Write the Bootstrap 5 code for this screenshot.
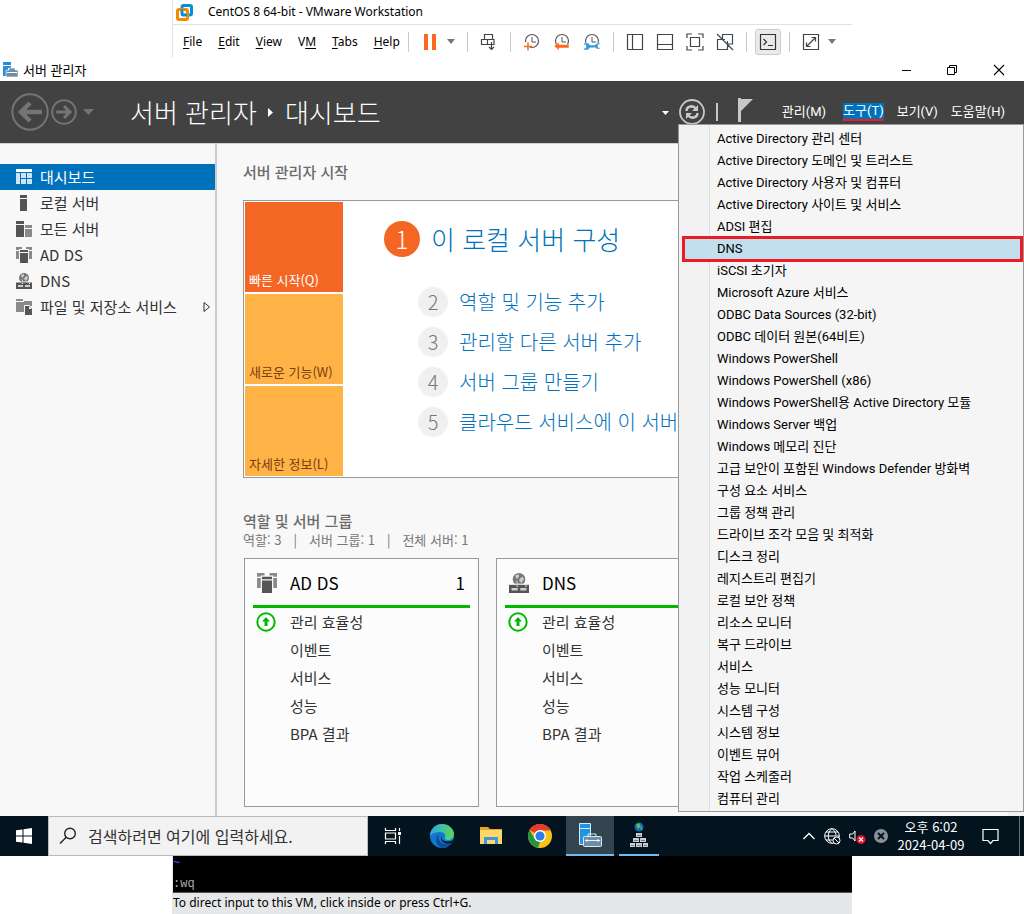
<!DOCTYPE html>
<html lang="ko">
<head>
<meta charset="utf-8">
<meta name="viewport" content="width=device-width, initial-scale=1">
<title>서버 관리자</title>
<link href="https://cdn.jsdelivr.net/npm/bootstrap@5.3.0/dist/css/bootstrap.min.css" rel="stylesheet">
<script src="https://cdn.jsdelivr.net/npm/bootstrap@5.3.0/dist/js/bootstrap.bundle.min.js"></script>
<style>
body{font-family:"Noto Sans CJK KR","Noto Sans",sans-serif;font-size:13px;line-height:16px;color:#000;background:#fff;overflow-x:hidden}
button{font:inherit;color:inherit;background:none;border:0;padding:0;white-space:nowrap}
a{text-decoration:none;color:inherit}
h1,h2,h3,p,ul,ol{margin:0;padding:0;font-size:inherit;line-height:inherit}
ul,ol{list-style:none}
svg{display:block;flex:none}
.vm{max-width:680px;border-left:1px solid #e4e4e4;font-family:"Noto Sans",sans-serif;font-size:12px}
.vm-title{height:25px;border-bottom:1px solid #e0e0e0;padding-left:3px;gap:15px}
.vm-bar{height:33px;padding-left:10px}
.vm-menu{gap:16px;width:225px}
.vm-menu u{text-underline-offset:2px}
.vsep{width:1px;height:20px;background:#c8c8c8}
.vm-tools{gap:12px}
.console{width:26px;height:26px;border:1px solid #ccc;border-radius:3px;background:#eaeaea;margin:0 -4px}
.win-title{height:23px;padding-left:3px;gap:5px}
.win-ctl{gap:36px;padding-right:19px}
.hdr{height:62px;background:#424242;color:#fff;padding-left:11px}
.crumb{font-size:26px;line-height:32px;font-weight:300;gap:10px;margin-left:35px}
.hdr-menu{gap:13px;padding-right:19px;font-family:Roboto,"Noto Sans CJK KR",sans-serif}
.hdr-icons{margin-right:13px}
.tool-btn{background:#0072bc;border-bottom:2px solid #ed1c24;height:18px;margin-left:4px}
.main{border-top:1px solid #d0d0d0;background:#f8f8f8;min-height:673px}
.side{width:217px;border-right:2px solid #ccc;padding-top:20px;color:#333}
.side a{height:26px;padding:0 4px 0 16px;gap:8px;font-size:15px}
.side a.sel{background:#0072bc;color:#fff}
.pane{padding:20px 0 8px 26px;color:#666;min-width:0}
.h-sec{font-size:15px;line-height:16px;font-weight:500;color:#6b6b6b}
.h-groups{margin-top:35px}
.hero{border:1px solid #999;background:#fff;margin-top:20px;padding:1px;gap:41px;height:278px}
.tiles{width:98px;gap:2px}
.tile{background:#ffb347;color:#7d3c0c;padding:0 4px 4px;text-align:left}
.tile.hot{background:#f46623;color:#fff}
.steps{color:#0072bc;font-weight:300;white-space:nowrap;padding-top:19px}
.step-main{font-size:26px;line-height:36px;gap:11px}
.step-list{padding:30px 0 0 34px;gap:10px}
.step-list li{font-size:20px;line-height:30px;gap:11px}
.num{width:30px;height:30px;border-radius:50%;background:#f0f0f0;color:#777;text-align:center}
.num.big{width:36px;height:36px;background:#f46623;color:#fff;font-size:24px}
.facts{line-height:18px;gap:12px;color:#777;margin-top:2px}
.tilecards{gap:17px;padding-left:1px;margin-top:9px}
.role{width:235px;height:249px;border:1px solid #999;background:#fcfcfc;padding:0 8px;color:#333}
.role-h{height:49px;border-bottom:3px solid #00b900;font-size:17px;font-weight:400;color:#000;padding:2px 5px 0 4px;gap:13px}
.role li{height:28px;line-height:28px;font-size:15px;padding-left:37px}
.role li:first-child{padding-left:3px;gap:14px}
.scroll{width:16px;background:#f0f0f0}
.tools-menu{top:43px;right:0;width:346px;border:1px solid #999;border-radius:0;background:linear-gradient(90deg,#f1f1f1 30px,#ddd 30px,#ddd 31px,#f5f5f5 31px);padding:3px 2px 1px 5px;z-index:5;box-shadow:none;--bs-dropdown-min-width:0;font-family:Roboto,"Noto Sans CJK KR",sans-serif}
.tools-menu .dropdown-item{height:22px;line-height:22px;padding:0 0 0 33px;color:#000;font-size:13px}
.tools-menu .dropdown-item.hit{background:#c3dfee;outline:3px solid #ed1c24;outline-offset:-1px;border:1px solid #26a0da;line-height:20px;padding-left:32px}
.task{height:40px;background:#03141f;color:#fff}
.start{width:48px}
.search{width:320px;background:#f2f2f2;border:1px solid #bbb;padding-left:10px;gap:11px}
.search input{border:0;background:none;outline:0;font-size:16px;color:#333;padding:0;width:240px}
.search input::placeholder{color:#333;opacity:1}
.apps button{width:49px;height:40px}
.apps button.on{width:48px;margin-left:2px;background:#34444f;border-bottom:2px solid #76b9ed}
.apps button.run{width:40px;margin-left:5px;border-bottom:2px solid #76b9ed}
.tray{gap:8px}
.clock{width:70px;text-align:center;line-height:18px}
.term{height:37px;background:#000;color:#aaa;font-family:"Liberation Mono",monospace;line-height:26px;border-bottom:1px solid #555}
.term .tilde{color:#55f;line-height:15px}
.status{height:21px;background:#e6e7e8;line-height:20px}
</style>
</head>
<body>
<svg width="0" height="0" class="position-absolute" aria-hidden="true">
<symbol id="adds" viewBox="0 0 16 16"><path fill="#8a8a8a" d="M0 0h6v3H4v9H0zM10 0h6v12h-4V3h-2z"/><path fill="#f8f8f8" d="M0 3h5v1H0zM11 3h5v1h-5zM3 2h10v14H3z"/><path fill="#555" d="M4 3h8v2H4zM4 6h8v10H4z"/></symbol>
<symbol id="dns" viewBox="0 0 16 16"><circle cx="8" cy="5" r="5" fill="#777"/><path fill="#ccc" d="M5 2l3-1 0 2-2 2zM9 4l2-1 1 2-2 3-2-2zM5 6l2 1v2z"/><path fill="#f8f8f8" d="M0 8.500h16v1H0z"/><path fill="#555" d="M0 9.500h16V16H0z"/><path fill="#ccc" d="M2 12h5v2H2zM9 12h5v2H9z"/><path fill="#fff" d="M6 10h1v1H6zM13 10h1v1h-1z"/></symbol>
<symbol id="up" viewBox="0 0 20 20"><circle cx="10" cy="10" r="8.700" fill="#fff" stroke="#00b900" stroke-width="2"/><path fill="#00b900" d="M10 5l4 4.500h-2.500V14h-3V9.500H6z"/></symbol>
<symbol id="clock" viewBox="0 0 18 18"><circle cx="9" cy="8" r="6.500" fill="none" stroke="#555" stroke-width="1.200"/><path d="M9 4v5h4" fill="none" stroke="#555"/></symbol>
</svg>

<header class="vm mx-auto">
<div class="vm-title d-flex align-items-center">
<svg width="17" height="17" viewBox="0 0 17 17" fill="none" stroke-width="3"><rect x="6" y="1.500" width="9.500" height="9.500" rx="1.500" stroke="#0091da"/><rect x="1.500" y="5.500" width="10" height="10" rx="1.500" stroke="#f38b00"/><path d="M6 5v6h5" stroke="#0091da" stroke-width="2"/></svg>
<span>CentOS 8 64-bit - VMware Workstation</span>
</div>
<div class="vm-bar d-flex align-items-center">
<nav class="vm-menu d-flex"><a href="#"><u>F</u>ile</a><a href="#"><u>E</u>dit</a><a href="#"><u>V</u>iew</a><a href="#">V<u>M</u></a><a href="#"><u>T</u>abs</a><a href="#"><u>H</u>elp</a></nav>
<div class="vm-tools d-flex align-items-center">
<span class="vsep"></span>
<button class="d-flex align-items-center gap-2" aria-label="Pause"><svg width="18" height="16"><path fill="#ff6720" d="M3 0h4v16H3zM11 0h4v16h-4z"/></svg><svg width="8" height="5"><path fill="#777" d="M0 0h8L4 5z"/></svg></button>
<span class="vsep"></span>
<button aria-label="Send keys"><svg width="18" height="18" fill="none" stroke="#444" stroke-width="1.200"><path d="M4.500 1.500h8v5h-8zM1.500 6.500h6v5h-6zM7.500 6.500h6.500v5H7.500zM11.500 9v7M9 14l2.500 2.500L14 14"/></svg></button>
<span class="vsep"></span>
<button aria-label="Take snapshot"><svg width="18" height="18"><use href="#clock"/><path fill="#fff" d="M0 9h7v8H0z"/><path d="M1 13.500h8M5 9.500v8" stroke="#ff6720" stroke-width="1.500"/></svg></button>
<button aria-label="Revert"><svg width="18" height="18"><use href="#clock"/><path fill="#ff6720" stroke="#fff" stroke-width=".5" d="M1 13l5-4v2.500h10v3.500H6v2.500z"/></svg></button>
<button aria-label="Manage snapshots"><svg width="18" height="18"><use href="#clock"/><path fill="#2f9be0" stroke="#fff" stroke-width=".5" d="M1 10h4l2 2h5l2-2h3v1.500h-2v3h2V16h-3l-2-1.500H7L5 17H1v-2h2v-3H1z"/></svg></button>
<span class="vsep"></span>
<button aria-label="Library"><svg width="18" height="18" fill="none" stroke="#444" stroke-width="1.200"><path d="M1.500 1.500h15v15h-15zM6.500 2v14"/></svg></button>
<button aria-label="Thumbnail bar"><svg width="18" height="18" fill="none" stroke="#444" stroke-width="1.200"><path d="M1.500 1.500h15v15h-15zM1.500 11.500h15"/></svg></button>
<button aria-label="Full screen"><svg width="18" height="18" fill="none" stroke="#444" stroke-width="1.200"><path d="M1 5V1h5M12 1h5v4M17 13v4h-5M6 17H1v-4M4.500 4.500h9v9h-9z"/></svg></button>
<button aria-label="Unity"><svg width="18" height="18" fill="none" stroke="#3b4a55" stroke-width="1.200"><path d="M6.500 6V1.500h10v9.500H12M11.500 8v8.500h-10v-10H9M1 1l16 16"/></svg></button>
<span class="vsep"></span>
<button class="console d-flex align-items-center justify-content-center" aria-label="Console"><svg width="18" height="18" fill="none" stroke="#333" stroke-width="1.200"><path d="M1.500 1.500h15v15h-15zM4.500 6l3 3-3 3M9 12.500h5"/></svg></button>
<span class="vsep"></span>
<button class="d-flex align-items-center gap-2" aria-label="Stretch"><svg width="18" height="18" fill="none" stroke="#444" stroke-width="1.200"><path d="M1.500 1.500h15v15h-15z"/><path d="M5 13l8-8M9.500 4.500h4v4M8.500 13.500h-4v-4"/></svg><svg width="8" height="5"><path fill="#777" d="M0 0h8L4 5z"/></svg></button>
</div>
</div>
</header>

<section>
<div class="win-title d-flex align-items-center">
<svg width="15" height="15"><path fill="#1e8fdb" d="M0 0h8v3H0zM0 4h8v2H5v8H0z"/><path fill="#6f8ea6" stroke="#fff" stroke-width=".6" d="M3 8h3V6h6v2h3v7H3z"/><path d="M4 10.500h10" stroke="#fff"/></svg>
<span class="flex-grow-1">서버 관리자</span>
<div class="win-ctl d-flex align-items-center" role="group">
<button aria-label="최소화"><svg width="10" height="12"><path d="M1 6.500h9" stroke="#000"/></svg></button>
<button aria-label="복원"><svg width="10" height="12" fill="none" stroke="#000"><path d="M.5 3.500h7v7h-7zM2.500 3V1.500h7v7H8"/></svg></button>
<button aria-label="닫기"><svg width="12" height="12"><path d="M1 1l10 10M11 1L1 11" stroke="#000" stroke-width="1.100"/></svg></button>
</div>
</div>

<div class="hdr position-relative d-flex align-items-center">
<svg width="84" height="38" viewBox="0 0 84 38" fill="none" stroke="#747474"><circle cx="19" cy="19" r="17.700" stroke-width="2"/><path d="M31 19H10M19 10l-9 9 9 9" stroke-width="4.500"/><circle cx="53" cy="19" r="11.800" stroke-width="2"/><path d="M45 19h14M53 13l6 6-6 6" stroke-width="3"/><path d="M72 16h11l-5.500 6z" fill="#747474" stroke="none"/></svg>
<h1 class="crumb d-flex align-items-center flex-grow-1"><span>서버 관리자</span><svg width="8" height="9"><path fill="#fff" d="M1 0l5 4.500L1 9z"/></svg><span>대시보드</span></h1>
<div class="hdr-menu d-flex align-items-center">
<svg class="hdr-icons" width="95" height="30" viewBox="0 0 95 30"><path fill="#fff" d="M1 14h7l-3.500 4z"/><g fill="none" stroke="#c8c8c8"><circle cx="31" cy="15" r="12" stroke-width="1.800"/><path d="M25.500 14c0-5 7-6 9-2.500M36.500 16c0 5-7 6-9 2.500" stroke-width="2.500"/></g><path fill="#c8c8c8" d="M37 8v6h-6zM25 22v-6h6zM55 6h2v18h-2zM77 1h3v24h-3zM80 2h12L80 14z"/></svg>
<button>관리(M)</button><button class="tool-btn" aria-expanded="true">도구(T)</button><button>보기(V)</button><button>도움말(H)</button>
</div>
<ul class="tools-menu dropdown-menu show">
<li><a class="dropdown-item" href="#">Active Directory 관리 센터</a></li>
<li><a class="dropdown-item" href="#">Active Directory 도메인 및 트러스트</a></li>
<li><a class="dropdown-item" href="#">Active Directory 사용자 및 컴퓨터</a></li>
<li><a class="dropdown-item" href="#">Active Directory 사이트 및 서비스</a></li>
<li><a class="dropdown-item" href="#">ADSI 편집</a></li>
<li><a class="dropdown-item hit" href="#">DNS</a></li>
<li><a class="dropdown-item" href="#">iSCSI 초기자</a></li>
<li><a class="dropdown-item" href="#">Microsoft Azure 서비스</a></li>
<li><a class="dropdown-item" href="#">ODBC Data Sources (32-bit)</a></li>
<li><a class="dropdown-item" href="#">ODBC 데이터 원본(64비트)</a></li>
<li><a class="dropdown-item" href="#">Windows PowerShell</a></li>
<li><a class="dropdown-item" href="#">Windows PowerShell (x86)</a></li>
<li><a class="dropdown-item" href="#">Windows PowerShell용 Active Directory 모듈</a></li>
<li><a class="dropdown-item" href="#">Windows Server 백업</a></li>
<li><a class="dropdown-item" href="#">Windows 메모리 진단</a></li>
<li><a class="dropdown-item" href="#">고급 보안이 포함된 Windows Defender 방화벽</a></li>
<li><a class="dropdown-item" href="#">구성 요소 서비스</a></li>
<li><a class="dropdown-item" href="#">그룹 정책 관리</a></li>
<li><a class="dropdown-item" href="#">드라이브 조각 모음 및 최적화</a></li>
<li><a class="dropdown-item" href="#">디스크 정리</a></li>
<li><a class="dropdown-item" href="#">레지스트리 편집기</a></li>
<li><a class="dropdown-item" href="#">로컬 보안 정책</a></li>
<li><a class="dropdown-item" href="#">리소스 모니터</a></li>
<li><a class="dropdown-item" href="#">복구 드라이브</a></li>
<li><a class="dropdown-item" href="#">서비스</a></li>
<li><a class="dropdown-item" href="#">성능 모니터</a></li>
<li><a class="dropdown-item" href="#">시스템 구성</a></li>
<li><a class="dropdown-item" href="#">시스템 정보</a></li>
<li><a class="dropdown-item" href="#">이벤트 뷰어</a></li>
<li><a class="dropdown-item" href="#">작업 스케줄러</a></li>
<li><a class="dropdown-item" href="#">컴퓨터 관리</a></li>
</ul>
</div>

<div class="main d-flex">
<nav class="side flex-shrink-0">
<a class="sel d-flex align-items-center" href="#"><svg width="16" height="16"><path fill="#fff" d="M0 0h16v3H0z"/><path fill="#cde5f5" d="M0 4h4v11H0zM5 4h5v5H5zM11 4h5v5h-5zM5 10h5v5H5zM11 10h5v5h-5z"/></svg>대시보드</a>
<a class="d-flex align-items-center" href="#"><svg width="16" height="16"><path fill="#555" d="M4 0h7v3H4zM4 4h7v12H4z"/></svg>로컬 서버</a>
<a class="d-flex align-items-center" href="#"><svg width="16" height="16"><path fill="#555" d="M0 0h8v3H0zM0 4h8v12H0z"/><path fill="#8a8a8a" d="M9 4h7v3H9zM9 8h7v8H9z"/></svg>모든 서버</a>
<a class="d-flex align-items-center" href="#"><svg width="16" height="16"><use href="#adds"/></svg>AD DS</a>
<a class="d-flex align-items-center" href="#"><svg width="16" height="16"><use href="#dns"/></svg>DNS</a>
<a class="d-flex align-items-center" href="#"><svg width="16" height="16"><path fill="#8a8a8a" d="M0 0h7v2H0zM0 3h8V2h8v5H8v6H0z"/><path fill="#555" stroke="#f8f8f8" d="M8.500 6.500h5l3 3v7h-8z"/><path fill="#f8f8f8" d="M13 7v3h3z"/></svg><span class="flex-grow-1">파일 및 저장소 서비스</span><svg width="8" height="12"><path d="M1 1.500v9l5.500-4.500z" fill="none" stroke="#333"/></svg></a>
</nav>
<main class="pane flex-grow-1 overflow-hidden">
<h2 class="h-sec">서버 관리자 시작</h2>
<div class="hero d-flex">
<div class="tiles d-flex flex-column flex-shrink-0">
<button class="tile hot flex-fill d-flex align-items-end">빠른 시작(Q)</button>
<button class="tile flex-fill d-flex align-items-end">새로운 기능(W)</button>
<button class="tile flex-fill d-flex align-items-end">자세한 정보(L)</button>
</div>
<div class="steps">
<div class="step-main d-flex"><span class="num big">1</span><a href="#">이 로컬 서버 구성</a></div>
<ol class="step-list d-flex flex-column">
<li class="d-flex"><span class="num">2</span><a href="#">역할 및 기능 추가</a></li>
<li class="d-flex"><span class="num">3</span><a href="#">관리할 다른 서버 추가</a></li>
<li class="d-flex"><span class="num">4</span><a href="#">서버 그룹 만들기</a></li>
<li class="d-flex"><span class="num">5</span><a href="#">클라우드 서비스에 이 서버</a></li>
</ol>
</div>
</div>
<h2 class="h-sec h-groups">역할 및 서버 그룹</h2>
<p class="facts d-flex"><span>역할: 3</span><span>|</span><span>서버 그룹: 1</span><span>|</span><span>전체 서버: 1</span></p>
<div class="tilecards d-flex">
<section class="role flex-shrink-0">
<h3 class="role-h d-flex align-items-center"><svg width="20" height="20"><use href="#adds"/></svg><span class="flex-grow-1">AD DS</span><span>1</span></h3>
<ul><li class="d-flex align-items-center"><svg width="20" height="20"><use href="#up"/></svg>관리 효율성</li><li>이벤트</li><li>서비스</li><li>성능</li><li>BPA 결과</li></ul>
</section>
<section class="role flex-shrink-0">
<h3 class="role-h d-flex align-items-center"><svg width="20" height="20"><use href="#dns"/></svg><span class="flex-grow-1">DNS</span></h3>
<ul><li class="d-flex align-items-center"><svg width="20" height="20"><use href="#up"/></svg>관리 효율성</li><li>이벤트</li><li>서비스</li><li>성능</li><li>BPA 결과</li></ul>
</section>
</div>
</main>
<div class="scroll flex-shrink-0"></div>
</div>

<footer class="task d-flex align-items-stretch">
<button class="start d-flex align-items-center justify-content-center" aria-label="시작"><svg width="16" height="16"><path fill="#fff" d="M0 2.300L6.500 1.400v6.100H0zM7.500 1.200L16 0v7.500H7.500zM0 8.500h6.500v6.100L0 13.700zM7.500 8.500H16V16l-8.500-1.200z"/></svg></button>
<label class="search d-flex align-items-center"><svg width="18" height="18" fill="none" stroke="#222" stroke-width="1.400"><circle cx="11" cy="6.500" r="5.300"/><path d="M7.200 10.300L1 16.500"/></svg><input type="text" placeholder="검색하려면 여기에 입력하세요." aria-label="검색"></label>
<div class="apps d-flex align-items-center flex-grow-1">
<button class="d-flex align-items-center justify-content-center" aria-label="작업 보기"><svg width="18" height="16" fill="none" stroke="#fff" stroke-width="1.200"><path d="M1.500 0v2.500h10V0M1.500 5h10v6h-10zM1.500 16v-2.500h10V16M15.500 0v3M15.500 8v8"/><path fill="#fff" stroke="none" d="M14 4h3v3h-3z"/></svg></button>
<button class="d-flex align-items-center justify-content-center" aria-label="Edge"><svg width="24" height="24" viewBox="0 0 24 24"><defs><linearGradient id="eg"><stop stop-color="#2aa8e8"/><stop offset="1" stop-color="#5bd65a"/></linearGradient></defs><circle cx="12" cy="12" r="12" fill="#1177d1"/><path fill="url(#eg)" d="M0 10C2 3 7 0 12 0c7 0 12 5 12 10 0 4-3 6-6 6s-4-1-3-3-1-5-5-5S2 9 0 12z"/><path fill="#0c4f98" d="M9 10c-2 4 1 10 7 10 3 0 5-1 6-2-2 4-6 6-10 6-6-2-8-10-3-14z"/><path fill="#03141f" d="M11.500 12c-1 4 3 6 7 5.500 3 0 4.500-1.500 5.500-3l-2 4c-2 1.500-7 1.500-9.500-1-1.500-1.500-2-3.500-1-5.500z"/></svg></button>
<button class="d-flex align-items-center justify-content-center" aria-label="탐색기"><svg width="22" height="20"><path fill="#e7a51b" d="M0 1h8l2 2h12v4H0z"/><path fill="#ffd768" d="M0 4h22v14H0z"/><path fill="#3e97dc" d="M4 11h14v7h-3v-4H7v4H4z"/></svg></button>
<button class="d-flex align-items-center justify-content-center" aria-label="Chrome"><svg width="24" height="24"><circle cx="12" cy="12" r="12" fill="#fbc116"/><path fill="#e33b2e" d="M12 12L1.600 6A12 12 0 0 1 22.400 6H12z"/><path fill="#229342" d="M1.600 6l5.200 9L12 18l-2 5.800A12 12 0 0 1 1.600 6z"/><path fill="#e33b2e" d="M1.600 6A12 12 0 0 1 22.400 6.500H12z"/><circle cx="12" cy="12" r="6" fill="#fff"/><circle cx="12" cy="12" r="4.600" fill="#2b7de9"/></svg></button>
<button class="on d-flex align-items-center justify-content-center" aria-label="서버 관리자"><svg width="26" height="26"><path fill="#1f94e0" stroke="#d5ecfa" d="M2.500 1.500h11v5h-11zM2.500 6.500h11v16h-11z"/><path fill="none" stroke="#d5ecfa" d="M11 15v-3h8v3"/><rect x="6.500" y="14.500" width="18" height="10" rx="1" fill="#6f8ea6" stroke="#d5ecfa"/><path d="M8 18.500h15M10 17v3M21 17v3" stroke="#e8f4fb"/></svg></button>
<button class="run d-flex align-items-center justify-content-center" aria-label="DNS 관리자"><svg width="20" height="26"><circle cx="10" cy="5" r="4.500" fill="#1565b8"/><path fill="#55c552" d="M7 3l3-2 2 3-3 3zM11 6l2-1v3z"/><path fill="#c9ccd2" d="M7 11h6v4H7zM4 16h6v4H4zM11 16h6v4h-6zM1 21h5v4H1zM7 21h6v4H7zM14 21h5v4h-5z"/><path fill="#77808a" d="M8 13h4v1H8zM5 18h4v1H5zM12 18h4v1h-4zM2 23h3v1H2zM8 23h4v1H8zM15 23h3v1h-3z"/></svg></button>
</div>
<div class="tray d-flex align-items-center">
<svg width="14" height="10"><path d="M1.500 8L7 2.500 12.500 8" fill="none" stroke="#fff" stroke-width="1.300"/></svg>
<svg width="17" height="17" fill="none" stroke="#fff"><circle cx="8" cy="8" r="7.300"/><path d="M.5 8h15M2 4h12M2 12h7M8 .5c-5 4-5 11 0 15M8 .5c3 3 4 5 4 7"/><circle cx="12.500" cy="12.500" r="3.500" fill="#03141f"/><path d="M10 10l5 5"/></svg>
<svg width="17" height="17"><path d="M.7 6h3L6 3v10L3.700 10h-3z" fill="none" stroke="#fff"/><circle cx="12" cy="11.500" r="4.500" fill="#e81123"/><path d="M10 9.500l4 4M14 9.500l-4 4" stroke="#fff" stroke-width="1.200"/></svg>
<svg width="14" height="14"><circle cx="7" cy="7" r="7" fill="#8a9096"/><path d="M4 4l6 6M10 4l-6 6" stroke="#03141f" stroke-width="2"/></svg>
<div class="clock"><div>오후 6:02</div><div>2024-04-09</div></div>
<button class="mx-2" aria-label="알림"><svg width="17" height="17"><path d="M1 1.500h15v11h-5L8.500 15.500 6 12.500H1z" fill="none" stroke="#fff" stroke-width="1.200"/></svg></button>
<span class="vsep h-100 ms-1 me-1 opacity-50"></span>
</div>
</footer>
</section>

<section class="vm mx-auto">
<div class="term"><div class="tilde">~</div><div>:wq</div></div>
<div class="status">To direct input to this VM, click inside or press Ctrl+G.</div>
</section>
</body>
</html>
